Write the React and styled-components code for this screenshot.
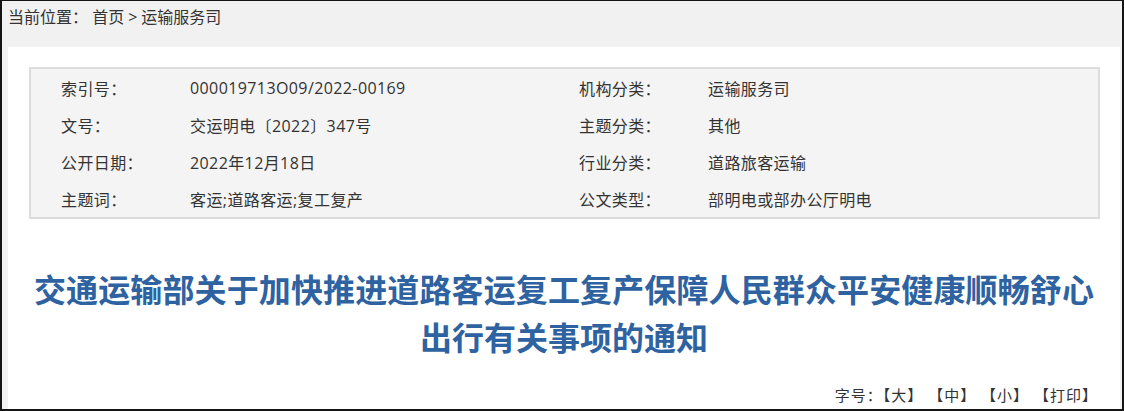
import React from 'react';
import styled, { createGlobalStyle } from 'styled-components';

const GlobalStyle = createGlobalStyle`
	html, body {
		margin: 0;
		padding: 0;
	}
	body {
		font-family: "Open Sans", "Noto Sans CJK SC", sans-serif;
		color: #333;
	}
`;

const Frame = styled.div`
	box-sizing: border-box;
	width: 1124px;
	height: 411px;
	overflow: hidden;
	display: flex;
	flex-direction: column;
	background: #f1f1f1;
	border: 2px solid #141414;
	border-top-width: 1px;
	padding: 0 2px 0 6px;
`;

const Breadcrumb = styled.div`
	flex: none;
	height: 46px;
	line-height: 32px;
	font-size: 16px;
	color: #333;

	span {
		margin: 0 4px;
	}
`;

const Panel = styled.div`
	flex: 1;
	background: #fff;
	padding: 20px 20px 0 21px;
`;

const InfoBox = styled.div`
	display: grid;
	grid-template-columns: 129px 389px 129px 1fr;
	grid-auto-rows: 37px;
	align-items: center;
	padding-left: 30px;
	background: #f4f4f4;
	border: 2px solid #dddddd;
	font-size: 16px;
	letter-spacing: 0.4px;
	color: #333;
`;

const Cell = styled.div`
	white-space: nowrap;
`;

const Title = styled.h1`
	margin: 45px 0 0;
	padding: 0 6px 0 5px;
	font-family: "Noto Sans CJK SC", sans-serif;
	font-size: 32px;
	font-weight: 700;
	line-height: 48px;
	color: #2e62a0;
`;

const TitleLine = styled.span`
	display: block;
	text-align: ${(p) => (p.$stretch ? 'justify' : 'center')};
	text-align-last: ${(p) => (p.$stretch ? 'justify' : 'center')};
`;

const Tools = styled.div`
	margin: 25px 2px 0 0;
	text-align: right;
	font-size: 15px;
	letter-spacing: 1px;
	line-height: 20px;
	color: #333;
`;

const rows = [
	['索引号：', '000019713O09/2022-00169', '机构分类：', '运输服务司'],
	['文号：', '交运明电〔2022〕347号', '主题分类：', '其他'],
	['公开日期：', '2022年12月18日', '行业分类：', '道路旅客运输'],
	['主题词：', '客运;道路客运;复工复产', '公文类型：', '部明电或部办公厅明电'],
];

export default function App() {
	return (
		<>
			<GlobalStyle />
			<Frame>
				<Breadcrumb>
					当前位置： 首页<span>&gt;</span>运输服务司
				</Breadcrumb>
				<Panel>
					<InfoBox>
						{rows.map((row) =>
							row.map((text, i) => <Cell key={row[0] + i}>{text}</Cell>)
						)}
					</InfoBox>
					<Title>
						<TitleLine $stretch>
							交通运输部关于加快推进道路客运复工复产保障人民群众平安健康顺畅舒心
						</TitleLine>
						<TitleLine>出行有关事项的通知</TitleLine>
					</Title>
					<Tools>字号：【大】 【中】 【小】 【打印】</Tools>
				</Panel>
			</Frame>
		</>
	);
}
